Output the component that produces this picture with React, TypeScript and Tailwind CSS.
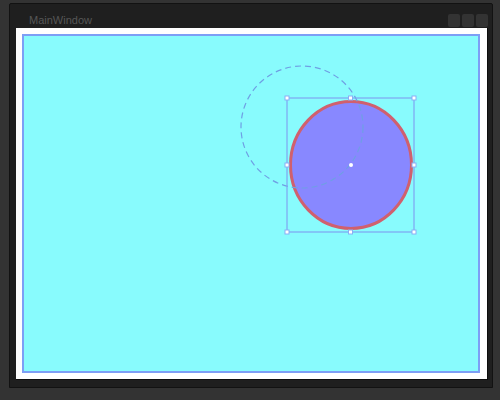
import React from "react";

const handles: [number, number][] = [
  [265, 64],
  [328.5, 64],
  [392, 64],
  [265, 131],
  [392, 131],
  [265, 198],
  [328.5, 198],
  [392, 198],
];

function Canvas() {
  return (
    <svg width="454" height="335" viewBox="2 2 454 335" className="block">
      {/* selected shape */}
      <ellipse cx={329} cy={131} rx={60.5} ry={63.5} fill="#8888ff" stroke="#d0606e" strokeWidth="3" />
      {/* ghost / drag preview */}
      <circle cx={280} cy={93} r={61} fill="none" stroke="#6f9fe4" strokeWidth="1.2" strokeDasharray="6 4" />
      {/* selection box */}
      <rect x={265} y={64} width={127} height={134} fill="none" stroke="#7fa6f2" strokeWidth="1.2" />
      {handles.map(([x, y], i) => (
        <rect key={i} x={x - 2} y={y - 2} width={4} height={4} fill="#ffffff" stroke="#8aaef5" strokeWidth="1" />
      ))}
      <circle cx={329} cy={131} r={2} fill="#ffffff" />
    </svg>
  );
}

export default function App() {
  return (
    <div className="w-[500px] h-[400px] bg-[#333333] pt-[3px] pl-[9px]">
      <div className="w-[484px] h-[385px] bg-[#1f1f1f] border border-[#121212] rounded-t-[2px] flex flex-col">
        <div className="h-[24px] flex items-center justify-between pl-[19px] pr-[4px]">
          <span className="text-[11px] text-[#565656] font-['Liberation_Sans',sans-serif] pt-[8px]">MainWindow</span>
          <div className="flex gap-[2px] pt-[9px]">
            <div className="w-[12px] h-[13px] rounded-[2px] bg-[#333333]" />
            <div className="w-[12px] h-[13px] rounded-[2px] bg-[#333333]" />
            <div className="w-[12px] h-[13px] rounded-[2px] bg-[#333333]" />
          </div>
        </div>
        <div className="ml-[6px] mr-[4px] mt-[0px] h-[352px] bg-white border-r border-b border-[#0e0e0e] pt-[6px] pl-[6px]">
          <div className="w-[458px] h-[339px] bg-[#88fbfd] border-2 border-[#7d9ff5]">
            <Canvas />
          </div>
        </div>
      </div>
    </div>
  );
}
